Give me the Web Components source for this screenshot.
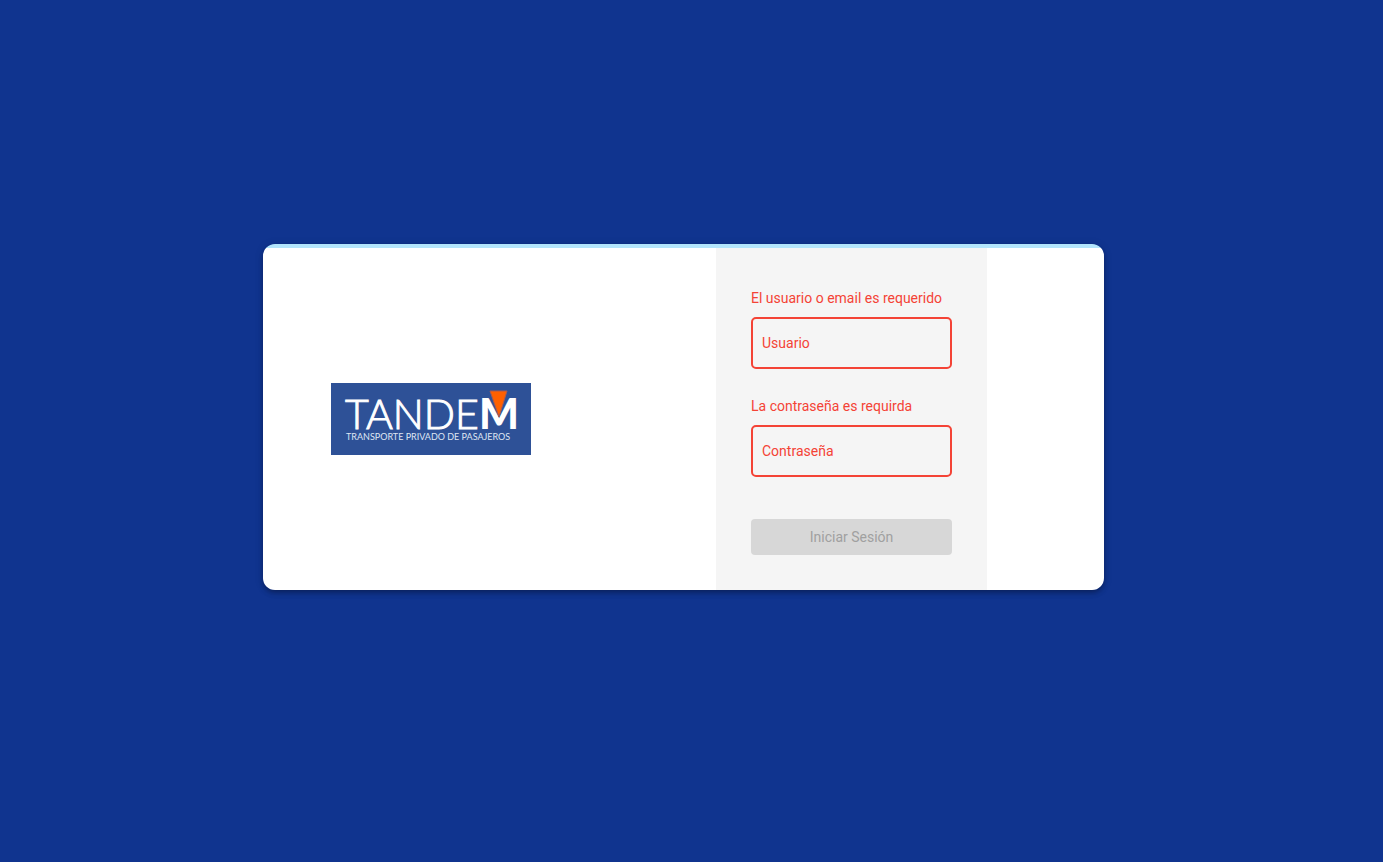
<!DOCTYPE html>
<html lang="es">
<head>
<meta charset="utf-8">
<title>Tandem - Iniciar Sesión</title>
<style>
  body { margin: 0; background: #10348f; font: 14px/20px Roboto, sans-serif; }
</style>
</head>
<body>
<login-page></login-page>
<script>
const define = (name, html, setup) => {
  const template = document.createElement('template');
  template.innerHTML = html;
  customElements.define(name, class extends HTMLElement {
    connectedCallback() {
      if (this.shadowRoot) return;
      const root = this.attachShadow({ mode: 'open' });
      root.append(template.content.cloneNode(true));
      if (setup) setup(this, root);
    }
  });
};

define('tandem-logo', `
  <style>
    :host { display: block; width: 200px; height: 72px; }
    svg { display: block; width: 100%; height: 100%; }
    text { font-family: Lato, sans-serif; fill: #fff; }
    .name { font-size: 41px; font-weight: 300; stroke: #fff; stroke-width: 1px; }
    .strong { font-size: 42px; font-weight: 900; }
    .tagline { font-size: 9px; font-weight: 400; fill: #dfe6f3; }
  </style>
  <svg viewBox="0 0 200 72" role="img" aria-label="Tandem, transporte privado de pasajeros">
    <rect width="200" height="72" fill="#2e5197"/>
    <text class="name" x="14" y="46">TANDE</text>
    <text class="strong" x="148" y="46">M</text>
    <path d="M159 8H176L168 34Z" fill="#ff6000" stroke="#a95a51" stroke-width="1"/>
    <text class="tagline" x="15" y="57">TRANSPORTE PRIVADO DE PASAJEROS</text>
  </svg>`);

define('login-field', `
  <style>
    :host { display: block; }
    label { display: block; line-height: 30px; margin-bottom: 4px; color: #f44336; white-space: nowrap; }
    input {
      display: block; box-sizing: border-box; width: 100%; height: 52px; margin: 0;
      padding: 0 9px; border: 2px solid #f44336; border-radius: 5px;
      background: transparent; color: #333; font: inherit; outline: 0;
    }
    input::placeholder { color: #f44336; opacity: 1; }
  </style>
  <label for="control"><slot></slot></label>
  <input id="control" aria-invalid="true" required>`,
  (host, root) => {
    const input = root.querySelector('input');
    input.type = host.getAttribute('type') || 'text';
    input.placeholder = host.getAttribute('placeholder');
  });

define('login-button', `
  <style>
    :host { display: block; }
    button {
      display: block; width: 100%; height: 36px; padding: 0 16px; border: 0;
      border-radius: 4px; background: #d7d7d7; color: #a0a0a0; font: inherit;
    }
  </style>
  <button type="submit" disabled><slot></slot></button>`);

define('login-card', `
  <style>
    :host {
      display: grid; grid-template-columns: 453fr 271px 117fr; box-sizing: border-box;
      width: 100%; max-width: 841px; overflow: hidden; padding-top: 4px;
      border-radius: 12px; background: linear-gradient(#b3e5fc 4px, #fff 4px);
      box-shadow: 0 2px 4px -1px rgba(0,0,0,.2), 0 4px 5px rgba(0,0,0,.14), 0 1px 10px rgba(0,0,0,.12);
    }
    .brand { display: flex; align-items: center; padding-left: 68px; }
    .panel { padding: 35px; background: #f5f5f5; }
  </style>
  <div class="brand"><slot name="brand"></slot></div>
  <div class="panel"><slot></slot></div>`);

define('login-page', `
  <style>
    :host {
      display: flex; align-items: center; justify-content: center;
      box-sizing: border-box; min-height: 100vh; padding: 0 16px 28px 0;
    }
    form { display: flex; flex-direction: column; gap: 22px; margin: 0; }
    login-button { margin-top: 20px; }
  </style>
  <login-card>
    <tandem-logo slot="brand"></tandem-logo>
    <form novalidate>
      <login-field placeholder="Usuario">El usuario o email es requerido</login-field>
      <login-field type="password" placeholder="Contraseña">La contraseña es requirda</login-field>
      <login-button>Iniciar Sesión</login-button>
    </form>
  </login-card>`);
</script>
</body>
</html>
